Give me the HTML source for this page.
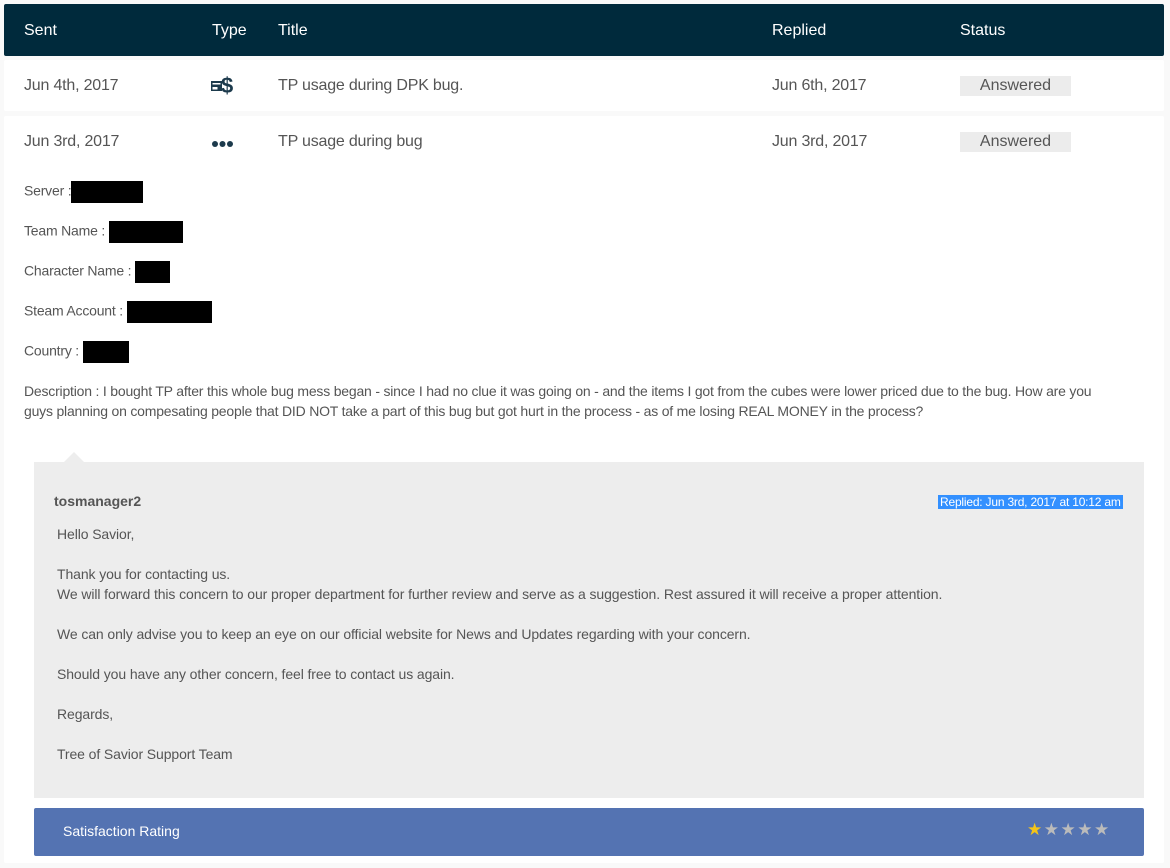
<!DOCTYPE html>
<html><head><meta charset="utf-8"><style>
*{margin:0;padding:0;box-sizing:border-box}
body{width:1170px;height:868px;background:#f9f9f9;font-family:"Liberation Sans",Arial,sans-serif;position:relative;overflow:hidden;color:#555}
.abs{position:absolute}
.hdr{left:4px;top:4px;width:1160px;height:52px;background:#002a3c;border-radius:2px}
.hdr span{position:absolute;top:18px;color:#fff;font-size:16px}
.row{left:4px;width:1160px;background:#fff;border-radius:2px}
.row .t{position:absolute;font-size:16px;color:#555;letter-spacing:-0.2px}
.badge{position:absolute;left:956px;width:111px;height:20px;background:#ececec;text-align:center;font-size:16px;line-height:20px;color:#555}
.f{position:absolute;left:20px;font-size:14px;color:#555;letter-spacing:-0.2px}
.blk{display:inline-block;background:#000;height:22px;vertical-align:middle}
.reply{left:34px;top:462px;width:1110px;height:336px;background:#ededed}
.reply p{position:absolute;left:23px;font-size:14px;color:#555;letter-spacing:-0.1px}
.rate{left:34px;top:808px;width:1110px;height:48px;background:#5473b2;border-radius:2px}
</style></head><body>
<div class="abs hdr">
<span style="left:20px">Sent</span><span style="left:208px">Type</span><span style="left:274px">Title</span><span style="left:768px">Replied</span><span style="left:956px">Status</span>
</div>
<div class="abs row" style="top:60px;height:51px">
<span class="t" style="left:20px;top:17px">Jun 4th, 2017</span>
<svg class="abs" style="left:207px;top:15px" width="26" height="22" viewBox="0 0 26 22"><rect x="0" y="6" width="11" height="10" fill="#1c3a4c"/><rect x="1.5" y="8" width="8" height="1.5" fill="#fff"/><rect x="1.5" y="12" width="5" height="2.5" fill="#fff"/><text x="10" y="18" font-size="22" font-weight="bold" fill="#1c3a4c" font-family="Liberation Sans">$</text></svg>
<span class="t" style="left:274px;top:17px">TP usage during DPK bug.</span>
<span class="t" style="left:768px;top:17px">Jun 6th, 2017</span>
<div class="badge" style="top:16px">Answered</div>
</div>
<div class="abs row" style="top:116px;height:747px">
<span class="t" style="left:20px;top:17px">Jun 3rd, 2017</span>
<svg class="abs" style="left:207px;top:24px" width="24" height="8"><circle cx="4" cy="4" r="3" fill="#1c3a4c"/><circle cx="11.5" cy="4" r="3" fill="#1c3a4c"/><circle cx="19" cy="4" r="3" fill="#1c3a4c"/></svg>
<span class="t" style="left:274px;top:17px">TP usage during bug</span>
<span class="t" style="left:768px;top:17px">Jun 3rd, 2017</span>
<div class="badge" style="top:16px">Answered</div>
<div class="f" style="top:65px">Server : <span class="blk" style="width:72px;margin-left:-4px"></span></div>
<div class="f" style="top:105px">Team Name : <span class="blk" style="width:74px"></span></div>
<div class="f" style="top:145px">Character Name : <span class="blk" style="width:35px"></span></div>
<div class="f" style="top:185px">Steam Account : <span class="blk" style="width:85px"></span></div>
<div class="f" style="top:225px">Country : <span class="blk" style="width:46px"></span></div>
<div class="f" style="top:265px;width:1110px;line-height:20px">Description : I bought TP after this whole bug mess began - since I had no clue it was going on - and the items I got from the cubes were lower priced due to the bug. How are you<br>guys planning on compesating people that DID NOT take a part of this bug but got hurt in the process - as of me losing REAL MONEY in the process?</div>
</div>
<div class="abs" style="left:64px;top:452px;width:0;height:0;border-left:10px solid transparent;border-right:10px solid transparent;border-bottom:10px solid #ededed"></div>
<div class="abs reply">
<div class="abs" style="left:20px;top:31px;font-size:14px;font-weight:bold;color:#555">tosmanager2</div>
<div class="abs" style="left:904px;top:33px;font-size:12px;background:#3390ff;color:#fff;padding:0 2px;letter-spacing:-0.2px">Replied: Jun 3rd, 2017 at 10:12 am</div>
<p style="top:64px">Hello Savior,</p>
<p style="top:102px;line-height:20px">Thank you for contacting us.<br>We will forward this concern to our proper department for further review and serve as a suggestion. Rest assured it will receive a proper attention.</p>
<p style="top:164px">We can only advise you to keep an eye on our official website for News and Updates regarding with your concern.</p>
<p style="top:204px">Should you have any other concern, feel free to contact us again.</p>
<p style="top:244px">Regards,</p>
<p style="top:284px">Tree of Savior Support Team</p>
</div>
<div class="abs rate">
<div class="abs" style="left:29px;top:15px;color:#fff;font-size:14px">Satisfaction Rating</div>
<div class="abs" style="left:993px;top:12px;font-size:17px;letter-spacing:1.5px;color:#bbb"><span style="color:#f5c518">★</span>★★★★</div>
</div>
</body></html>
